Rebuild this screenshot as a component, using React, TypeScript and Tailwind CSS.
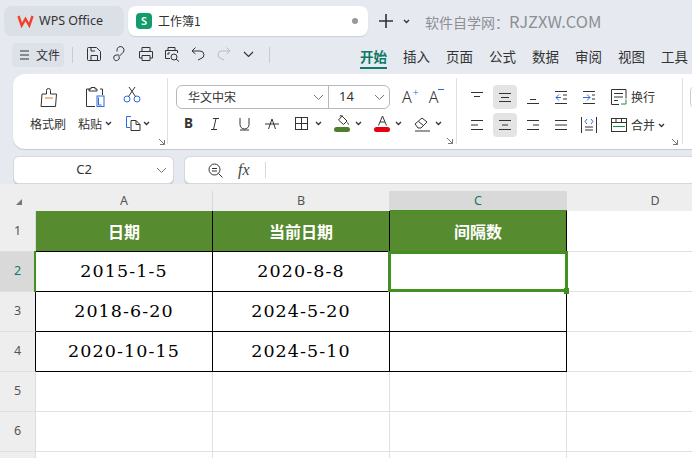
import type { ReactNode } from "react";

const CJK = "font-['Noto_Sans_CJK_SC','Noto_Sans',sans-serif]";
const LATIN = "font-['Noto_Sans',sans-serif]";

function Ico({ w = 16, h = 16, children, className = "" }: { w?: number; h?: number; children: ReactNode; className?: string }) {
  return (
    <svg width={w} height={h} viewBox={`0 0 ${w} ${h}`} fill="none" stroke="#333" strokeWidth="1" className={`shrink-0 ${className}`}>
      {children}
    </svg>
  );
}

function Caret({ className = "" }: { className?: string }) {
  return (
    <svg width="7" height="5" viewBox="0 0 7 5" fill="none" stroke="#333" strokeWidth="1.3" className={`shrink-0 ${className}`}>
      <path d="M1 1l2.5 2.5L6 1" />
    </svg>
  );
}

function Chev() {
  return (
    <svg width="11" height="7" viewBox="0 0 11 7" fill="none" stroke="#777" strokeWidth="1" className="shrink-0">
      <path d="M1 1l4.5 4.5L10 1" />
    </svg>
  );
}

function Corner({ className = "" }: { className?: string }) {
  return (
    <svg width="6" height="6" viewBox="0 0 6 6" fill="none" stroke="#777" strokeWidth="1" className={`shrink-0 ${className}`}>
      <path d="M0 0l5.5 5.5M5.500 1v4.500H1" />
    </svg>
  );
}

function TitleBar() {
  return (
    <div className="flex h-[30px] items-center pl-1">
      <div className="flex h-[30px] w-[120px] items-center rounded-lg bg-[#dbdfe6] pl-[13px]">
        <svg width="17" height="14" viewBox="0 0 17 14" fill="none" stroke="#f2402c" strokeWidth="2.4" className="shrink-0">
          <path d="M1.5 2l3.2 9.5L8.5 5l3.8 6.5L15.5 2" />
        </svg>
        <span className={`ml-[5px] text-[12.5px] text-[#333] ${LATIN}`}>WPS Office</span>
      </div>
      <div className="ml-1 flex h-[30px] w-[240px] items-center rounded-lg bg-white pl-2 shadow-[0_1px_1px_#c9ced6]">
        <div className={`flex h-4 w-4 items-center justify-center rounded-sm bg-[#129c6b] text-[11px] font-semibold text-white ${LATIN}`}>S</div>
        <span className={`ml-[6px] text-[12px] text-[#333] ${CJK}`}>工作簿1</span>
        <span className="ml-auto mr-[10px] h-[6px] w-[6px] rounded-full bg-[#999]" />
      </div>
      <svg width="16" height="16" viewBox="0 0 16 16" stroke="#333" strokeWidth="1.6" className="ml-[10px] shrink-0">
        <path d="M8 1v14M1 8h14" />
      </svg>
      <Caret className="ml-[9px]" />
      <span className={`ml-[15px] text-[14px] text-[#8c8f94] ${CJK}`}>
        软件自学网：<span className="text-[16.5px]">RJZXW.COM</span>
      </span>
    </div>
  );
}

const TABS = ["开始", "插入", "页面", "公式", "数据", "审阅", "视图", "工具"];

function QuickBar() {
  return (
    <div className="mt-[7px] flex h-[26px] items-start pl-3">
      <div className="flex h-6 w-[52px] shrink-0 items-center rounded bg-[#dde1e8] pl-[8px]">
        <Ico w={9} h={10}><path d="M0 1h9M0 5h9M0 9h9" /></Ico>
        <span className={`ml-[7px] whitespace-nowrap text-[12px] text-[#333] ${CJK}`}>文件</span>
      </div>
      <div className="ml-2 mt-1 h-4 w-px shrink-0 bg-[#c8ccd2]" />
      <div className="ml-[13px] mt-[3px] flex items-center gap-[10px]">
        <Ico><path d="M1.5 2.5a1 1 0 011-1h8l4 4v8a1 1 0 01-1 1h-11a1 1 0 01-1-1zM5 14.500v-5h6.500v5M5 1.500V5h4" /></Ico>
        <Ico><path d="M5 5.5V4a3.500 3.500 0 116 2.500L7 10.500M7 10.500a2.800 2.800 0 11-3-1.500h3" /></Ico>
        <Ico><path d="M4 5V1.500h8V5M4 12H1.500V5.500h13V12H12M4 9.500h8v5H4z" /></Ico>
        <Ico><path d="M4 4V1.500h7V4M6 12.500H1.500V4.500h12V7M4 9V7h2" /><circle cx="10" cy="11" r="3" /><path d="M12.200 13.200L15 15.500" /></Ico>
        <Ico><path d="M5.5 1.500L2 5l3.500 3M2 5h8a3.800 3.800 0 011 7.500l-3 1.500" /></Ico>
        <Ico><g stroke="#bbb"><path d="M10.500 1.500L14 5l-3.500 3M14 5H6a3.800 3.800 0 00-1 7.500l3 1.500" /></g></Ico>
        <svg width="11" height="7" viewBox="0 0 11 7" fill="none" stroke="#333" strokeWidth="1.2" className="ml-[1px] shrink-0"><path d="M1 1l4.5 4.5L10 1" /></svg>
      </div>
      <div className="ml-[15px] mt-1 h-4 w-px shrink-0 bg-[#c8ccd2]" />
      <div className={`ml-[90px] flex shrink-0 gap-[16px] text-[13.5px] text-[#333] ${CJK}`}>
        {TABS.map((t, i) => (
          <span key={t} className={`relative h-6 w-[27px] whitespace-nowrap leading-[26px] ${i === 0 ? "font-bold text-[#0d7a66]" : ""}`}>
            {t}
            {i === 0 && <span className="absolute -bottom-[2px] left-0 h-[2px] w-[27px] bg-[#0d7a66]" />}
          </span>
        ))}
      </div>
    </div>
  );
}

function ClipboardGroup() {
  return (
    <div className="mt-1 flex h-[66px] w-[155px] shrink-0 flex-col border-r border-[#dcdfe3] pl-[17px] pt-[7px]">
      <div className="flex h-[22px] items-start">
        <div className="flex w-[37px] justify-center pt-[2px]">
          <Ico w={20} h={22}><path d="M7.5 7V3.500a2 2 0 014 0V7H17.500L16.500 19.500H2L2.500 14 3 7z" /><path d="M6 11h8" stroke="#d07a30" /></Ico>
        </div>
        <div className="ml-[9px] flex w-[37px] justify-center pt-[1px]">
          <Ico w={20} h={22}><path d="M5 3H1.500v17.500H10M6 3V1.500h4V3h2v2H4V3h2M15 3h2.500v6" /><rect x="12" y="10" width="7" height="10.500" stroke="#2d6ae0" /><path d="M13.500 11.500v7.500h3" stroke="#2d6ae0" /></Ico>
        </div>
        <div className="ml-[10px] pt-[1px]">
          <Ico w={18} h={18}><g stroke="#2d6ae0"><circle cx="4" cy="13" r="3" /><circle cx="14" cy="13" r="3" /></g><path d="M5.5 10.500L12 1M12.500 10.500L6 1" /></Ico>
        </div>
      </div>
      <div className={`mt-[8px] flex h-[17px] items-center text-[12px] text-[#333] ${CJK}`}>
        <span className="whitespace-nowrap">格式刷</span>
        <span className="ml-[12px] whitespace-nowrap">粘贴</span>
        <Caret className="ml-[3px]" />
        <Ico w={17} h={17} className="ml-[13px]"><path d="M6 1.500H1.500v11H5" stroke="#2d6ae0" /><path d="M6 5.500h5l4 4v6H6zM11 5.500v4h4" /></Ico>
        <Caret className="ml-[1px]" />
      </div>
      <Corner className="ml-[129px] mt-[7px]" />
    </div>
  );
}

function FontGroup() {
  return (
    <div className="mt-1 flex h-[66px] w-[289px] shrink-0 flex-col border-r border-[#dcdfe3] pl-2 pt-[7px]">
      <div className="flex items-center">
        <div className="flex h-6 w-[214px] items-center rounded-md border border-[#b5b8bd] bg-white">
          <div className={`flex h-full w-[152px] items-center justify-between border-r border-[#b5b8bd] pl-[11px] pr-1 text-[12px] text-[#333] ${CJK}`}>
            <span>华文中宋</span>
            <Chev />
          </div>
          <div className={`flex h-full flex-1 items-center justify-between pl-[10px] pr-1 text-[13px] text-[#333] ${LATIN}`}>
            <span>14</span>
            <Chev />
          </div>
        </div>
        <span className={`relative ml-3 text-[16px] font-light leading-none text-[#333] ${LATIN}`}>
          A<span className="absolute -right-[7px] -top-[3px] text-[11px] leading-none text-[#2d6ae0]">+</span>
        </span>
        <span className={`relative ml-[17px] text-[16px] font-light leading-none text-[#333] ${LATIN}`}>
          A<span className="absolute -right-[6px] top-0 h-px w-[6px] bg-[#2d6ae0]" />
        </span>
      </div>
      <div className="mt-1 flex h-[22px] items-center pl-2">
        <span className={`w-[9px] text-[13.5px] font-bold text-[#333] ${LATIN}`}>B</span>
        <Ico w={10} h={14} className="ml-[17px]"><path d="M3 1.500h6M6 1.500L3.500 12.500M1 12.500h6" /></Ico>
        <Ico w={11} h={14} className="ml-[19px]"><path d="M1 1v6.500a4.500 4.500 0 009 0V1M1 13h9" /></Ico>
        <Ico w={14} h={14} className="ml-[15px]"><path d="M3.500 12L7 2l3.500 10M0 7h14" /></Ico>
        <Ico w={13} h={13} className="ml-[16px]"><rect x="0.5" y="0.5" width="12" height="12" /><path d="M6.500 0.500v12M0.500 6.500h12" /></Ico>
        <Caret className="ml-[7px]" />
        <div className="ml-3 flex w-4 flex-col items-center">
          <Ico w={13} h={11}><path d="M6 1l5 5-3.500 3.500L2.500 5zM4 1.500a1.500 1.500 0 012.500-1M11.500 7.500l1 2" /></Ico>
          <span className="mt-[1px] h-[5px] w-4 rounded-sm bg-[#4f7f2c]" />
        </div>
        <Caret className="ml-[5px]" />
        <div className="ml-3 flex w-4 flex-col items-center">
          <Ico w={11} h={11}><path d="M1.500 10.500L5.500 1l4 9.500M3 7h5" /></Ico>
          <span className="mt-[1px] h-[5px] w-4 rounded-sm bg-[#e60012]" />
        </div>
        <Caret className="ml-[5px]" />
        <Ico w={17} h={16} className="ml-3"><path d="M1 8l7-6 5 4-6 6H4zM4.500 5.500l5 4M1 15h15" /></Ico>
        <Caret className="ml-1" />
      </div>
      <Corner className="ml-[271px] mt-1" />
    </div>
  );
}

function AlignCell({ active, children }: { active?: boolean; children: ReactNode }) {
  return <div className={`flex h-6 w-6 shrink-0 items-center justify-center rounded ${active ? "bg-[#e4e4e4]" : ""}`}>{children}</div>;
}

function Lines({ d }: { d: string }) {
  return <Ico w={14} h={14}><path d={d} /></Ico>;
}

function AlignGroup() {
  return (
    <div className="mt-1 flex h-[66px] w-[226px] shrink-0 flex-col border-r border-[#dcdfe3] pl-2 pt-[7px]">
      <div className="flex items-center gap-1">
        <AlignCell><Lines d="M1 2.500h12M4 6.500h6" /></AlignCell>
        <AlignCell active><Lines d="M1 3.500h12M3 7.500h8M1 11.500h12" /></AlignCell>
        <AlignCell><Lines d="M4 9.500h6M1 13.500h12" /></AlignCell>
        <AlignCell>
          <Ico w={14} h={14}><path d="M1 1.500h12M9 5h4M9 9h4M1 13.500h12" /><path d="M5 4.500L2 7.500l3 3M2 7.500h5" stroke="#2d6ae0" /></Ico>
        </AlignCell>
        <AlignCell>
          <Ico w={14} h={14}><path d="M1 1.500h12M10 5h3M10 9h3M1 13.500h12" /><path d="M5 4.500l3 3-3 3M1 7.500h7" stroke="#2d6ae0" /></Ico>
        </AlignCell>
        <div className={`ml-[6px] flex items-center text-[12px] text-[#333] ${CJK}`}>
          <Ico><path d="M8 15.500H.5V.5h14.500v9M3 4.500h9M3 8h9M3 11.500h4" /><path d="M15 10.500v4.500H10" stroke="#1f8a4c" /></Ico>
          <span className="ml-1 whitespace-nowrap">换行</span>
        </div>
      </div>
      <div className="mt-1 flex items-center gap-1">
        <AlignCell><Lines d="M1 2.500h12M1 7h7M1 11.500h12" /></AlignCell>
        <AlignCell active><Lines d="M1 2.500h12M4 7h6M1 11.500h12" /></AlignCell>
        <AlignCell><Lines d="M1 2.500h12M7 7h6M1 11.500h12" /></AlignCell>
        <AlignCell><Lines d="M1 2.500h12M1 7h12M1 11.500h12" /></AlignCell>
        <AlignCell>
          <Ico><path d="M.5 0v16M15.500 0v16M4 10h8M4 13h8" /><path d="M6 2L4 4.500 6 7M10 2l2 2.500L10 7" stroke="#2d6ae0" /></Ico>
        </AlignCell>
        <div className={`ml-[6px] flex items-center text-[12px] text-[#333] ${CJK}`}>
          <Ico w={16} h={14}><rect x="0.5" y="0.5" width="15" height="13" /><path d="M0.5 4.500h15M5 .5v4M10.500 .5v4" /><path d="M2 8.500h12" stroke="#1f8a4c" /></Ico>
          <span className="ml-1 whitespace-nowrap">合并</span>
          <Caret className="ml-[3px]" />
        </div>
      </div>
      <Corner className="ml-[207px] mt-[2px]" />
    </div>
  );
}

function Ribbon() {
  return (
    <div className="ml-[13px] mt-[5px] flex h-[75px] items-start overflow-hidden rounded-l-xl bg-white shadow-[0_1px_1px_#c4c8ce]">
      <ClipboardGroup />
      <FontGroup />
      <AlignGroup />
      <div className="ml-[7px] mt-[11px] h-6 w-6 shrink-0 rounded-l-md border border-[#c8ccd2]" />
    </div>
  );
}

function FormulaBar() {
  return (
    <div className="mt-[7px] flex h-[28px] pl-[13px]">
      <div className="flex w-[161px] items-center rounded-md border border-[#d5d8dd] bg-white pr-[6px] shadow-[0_1px_0_#c4c8ce]">
        <span className={`flex-1 pr-[2px] text-center text-[13px] text-[#333] ${LATIN}`}>C2</span>
        <Chev />
      </div>
      <div className="ml-[10px] flex flex-1 items-center rounded-l-md border border-r-0 border-[#d5d8dd] bg-white pl-[23px] shadow-[0_1px_0_#c4c8ce]">
        <Ico w={15} h={15}><circle cx="6.5" cy="6.5" r="5.500" /><path d="M4 5.500h5M4 8h5M10.500 10.500l4 4" /></Ico>
        <span className="ml-[15px] w-[14px] font-['Liberation_Serif',serif] text-[16px] italic text-[#444]">fx</span>
        <span className="ml-[13px] h-4 w-px bg-[#d5d8dd]" />
      </div>
    </div>
  );
}

const COL = "w-[177px] shrink-0";
const NUMBER = "font-['DejaVu_Serif',serif] text-[17.5px] tracking-[1.1px] text-black";

function ColHeader({ label, active }: { label: string; active?: boolean }) {
  return (
    <div className={`flex h-5 items-center justify-center border-r border-[#d9d9d9] text-[12.5px] ${LATIN} ${COL} ${active ? "bg-[#d9d9d9] text-[#0d7a66]" : "text-[#555]"}`}>
      {label}
    </div>
  );
}

const ROWS = [
  { n: 1, h: "h-[41px]", cells: ["日期", "当前日期", "间隔数"], head: true },
  { n: 2, h: "h-10", cells: ["2015-1-5", "2020-8-8", ""], active: true },
  { n: 3, h: "h-10", cells: ["2018-6-20", "2024-5-20", ""] },
  { n: 4, h: "h-10", cells: ["2020-10-15", "2024-5-10", ""] },
  { n: 5, h: "h-10", cells: [] },
  { n: 6, h: "h-10", cells: [] },
  { n: 7, h: "h-10", cells: [] },
];

function Sheet() {
  return (
    <div className="flex-1 overflow-hidden bg-[#eeeeee] pt-[7px]">
      <div className="flex">
        <div className="flex h-5 w-9 shrink-0 items-center justify-center">
          <span className="ml-[1px] mt-[2px] h-0 w-0 border-b-[6px] border-l-[6px] border-b-[#777] border-l-transparent" />
        </div>
        <ColHeader label="A" />
        <ColHeader label="B" />
        <ColHeader label="C" active />
        <ColHeader label="D" />
      </div>
      <div className="relative bg-white">
        {ROWS.map((r) => (
          <div key={r.n} className="flex">
            <div
              className={`flex w-9 shrink-0 items-center justify-center border-b border-b-[#e0e0e0] border-r text-[12.5px] ${LATIN} ${r.h} ${
                r.n === 3 || r.n === 4 ? "border-r-black" : "border-r-[#dcdcdc]"
              } ${r.active ? "bg-[#d9d9d9] text-[#0d7a66]" : "bg-[#eeeeee] text-[#555]"}`}
            >
              {r.n < 7 ? r.n : ""}
            </div>
            {r.cells.length > 0 ? (
              r.cells.map((c, i) => (
                <div
                  key={i}
                  className={`flex items-center justify-center border-r border-b border-black ${COL} ${r.h} ${
                    r.head ? `bg-[#578b2f] text-[16px] font-bold text-white ${CJK}` : NUMBER
                  }`}
                >
                  {c}
                </div>
              ))
            ) : (
              <>
                <div className={`border-r border-b border-[#e0e0e0] ${COL} ${r.h}`} />
                <div className={`border-r border-b border-[#e0e0e0] ${COL} ${r.h}`} />
                <div className={`border-r border-b border-[#e0e0e0] ${COL} ${r.h}`} />
              </>
            )}
            <div className={`border-b border-[#e0e0e0] ${COL} ${r.h}`} />
          </div>
        ))}
        <div className="absolute left-[390px] top-[-1px] h-px w-[177px] bg-[#42901f]" />
        <div className="absolute left-[388px] top-[40px] h-[41px] w-[180px] border-[3px] border-[#42901f]" />
        <div className="absolute left-[564px] top-[77px] h-[6px] w-[5px] bg-[#42901f]" />
        <div className="absolute left-[34px] top-[40px] h-[41px] w-[2px] bg-[#42901f]" />
      </div>
    </div>
  );
}

export default function App() {
  return (
    <div className="flex h-[458px] w-[692px] flex-col overflow-hidden bg-[#e6eaf0] pt-[6px]">
      <TitleBar />
      <QuickBar />
      <Ribbon />
      <FormulaBar />
      <Sheet />
    </div>
  );
}
